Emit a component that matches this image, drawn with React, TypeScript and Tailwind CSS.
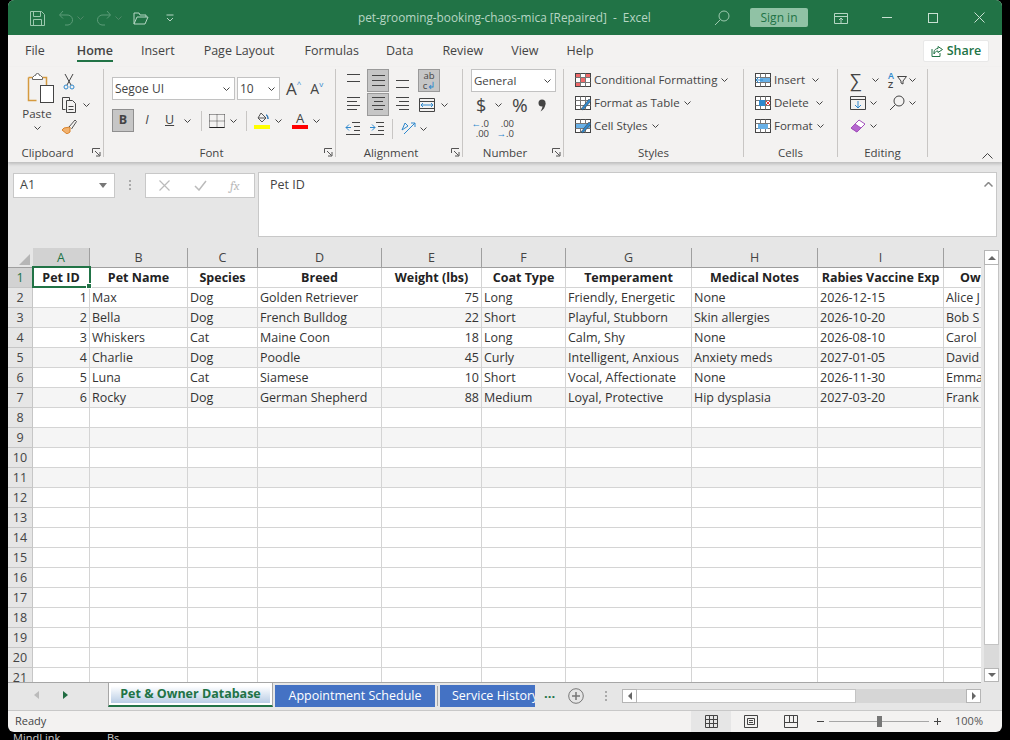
import type { ReactNode } from "react";

const font = "font-['Open_Sans','Noto_Sans',sans-serif]";

function Chev({ className = "" }: { className?: string }) {
  return (
    <svg width="7" height="4" viewBox="0 0 7 4" fill="none" stroke="#444" strokeWidth="1" className={className}>
      <path d="M.5.500l3 3 3-3" />
    </svg>
  );
}

function Ic({ w = 16, h = 16, children, className = "" }: { w?: number; h?: number; children: ReactNode; className?: string }) {
  return (
    <svg width={w} height={h} viewBox={`0 0 ${w} ${h}`} fill="none" className={`shrink-0 ${className}`}>
      {children}
    </svg>
  );
}

// horizontal text-line style icon used by the alignment group
function Lines({ rows }: { rows: [number, number, number][] }) {
  return (
    <Ic w={15} h={15}>
      {rows.map(([y, x1, x2]) => (
        <path key={y} d={`M${x1} ${y}.5H${x2}`} stroke="#444" />
      ))}
    </Ic>
  );
}

function GridIcon({ children }: { children?: ReactNode }) {
  return (
    <Ic>
      <rect x=".5" y="1.500" width="15" height="13" stroke="#444" fill="#fff" />
      <path d="M.5 5.500h15M.5 10.500h15M5.500 1.500v13M10.500 1.500v13" stroke="#777" />
      {children}
    </Ic>
  );
}

function Group({ width, label, launcher, children }: { width: number; label: string; launcher?: boolean; children: ReactNode }) {
  return (
    <div style={{ width }} className="relative h-[88px] shrink-0 border-r border-[#c8c6c4]">
      <div className="h-[78px]">{children}</div>
      <div className={`text-center text-[11.5px] leading-[12px] text-[#444] ${launcher ? "pr-[16px]" : ""}`}>{label}</div>
      {launcher && (
        <svg width="9" height="9" viewBox="0 0 9 9" fill="none" stroke="#555" className="absolute bottom-0 right-[2px]">
          <path d="M.5 5V.5H8M3 3l4.500 4.500M8 4v4H4" />
        </svg>
      )}
    </div>
  );
}

const tabs = [
  { label: "File", ml: 17 },
  { label: "Home", ml: 32, active: true },
  { label: "Insert", ml: 28 },
  { label: "Page Layout", ml: 29 },
  { label: "Formulas", ml: 30 },
  { label: "Data", ml: 27 },
  { label: "Review", ml: 29 },
  { label: "View", ml: 28 },
  { label: "Help", ml: 28 },
];

const columns = ["A", "B", "C", "D", "E", "F", "G", "H", "I", ""];

const headers = ["Pet ID", "Pet Name", "Species", "Breed", "Weight (lbs)", "Coat Type", "Temperament", "Medical Notes", "Rabies Vaccine Exp", "Ow"];

const rows = [
  ["1", "Max", "Dog", "Golden Retriever", "75", "Long", "Friendly, Energetic", "None", "2026-12-15", "Alice J"],
  ["2", "Bella", "Dog", "French Bulldog", "22", "Short", "Playful, Stubborn", "Skin allergies", "2026-10-20", "Bob S"],
  ["3", "Whiskers", "Cat", "Maine Coon", "18", "Long", "Calm, Shy", "None", "2026-08-10", "Carol"],
  ["4", "Charlie", "Dog", "Poodle", "45", "Curly", "Intelligent, Anxious", "Anxiety meds", "2027-01-05", "David"],
  ["5", "Luna", "Cat", "Siamese", "10", "Short", "Vocal, Affectionate", "None", "2026-11-30", "Emma"],
  ["6", "Rocky", "Dog", "German Shepherd", "88", "Medium", "Loyal, Protective", "Hip dysplasia", "2027-03-20", "Frank"],
];

const gridCols = "grid-cols-[25px_57px_98px_70px_124px_100px_84px_126px_126px_126px_72px]";

function Spreadsheet() {
  const rowNums = Array.from({ length: 21 }, (_, i) => i + 1);
  return (
    <div className="relative min-w-0 flex-1 overflow-hidden border-b border-[#a6a6a6]">
      <div className={`grid w-[1008px] ${gridCols} auto-rows-[20px] text-[12.5px] leading-[19px] text-[#333]`}>
        <div className="relative border-b border-[#9f9f9f] bg-[#e6e6e6]">
          <div className="absolute bottom-[2px] right-[3px] h-0 w-0 border-b-[11px] border-l-[11px] border-b-[#b6b6b6] border-l-transparent" />
        </div>
        {columns.map((c, i) => (
          <div
            key={i}
            className={`border-r border-b border-[#9f9f9f] text-center ${i === 0 ? "bg-[#d2d2d2] text-[#217346]" : "bg-[#e6e6e6] text-[#444]"} ${i === 9 ? "border-r-0" : ""}`}
          >
            {c}
          </div>
        ))}
        {rowNums.map((n) => {
          const data = n === 1 ? headers : n <= 7 ? rows[n - 2] : null;
          const shaded = n > 1 && n % 2 === 1 && n < 12;
          return (
            <div key={n} className="contents">
              <div className={`border-r border-b border-[#c6c6c6] text-center ${n === 1 ? "bg-[#d2d2d2] text-[#217346]" : "bg-[#e6e6e6] text-[#444]"}`}>
                {n}
              </div>
              {columns.map((_, c) => {
                const value = data ? data[c] : "";
                const right = n > 1 && (c === 0 || c === 4);
                return (
                  <div
                    key={c}
                    className={`overflow-hidden whitespace-nowrap border-r border-b border-[#d4d4d4] px-[2px] ${shaded ? "bg-[#f5f5f5]" : "bg-white"} ${n === 1 && c < 9 ? "text-center" : ""} ${n === 1 ? "font-bold text-[#222]" : ""} ${n === 1 && c === 9 ? "pl-[16px]" : ""} ${right ? "text-right" : ""}`}
                  >
                    {value}
                  </div>
                );
              })}
            </div>
          );
        })}
      </div>
      {/* selected cell A1 */}
      <div className="absolute left-[24px] top-[18px] h-[22px] w-[59px] border-2 border-[#217346]">
        <div className="absolute -bottom-[3px] -right-[3px] h-[6px] w-[6px] border border-white bg-[#217346]" />
      </div>
    </div>
  );
}

export default function App() {
  return (
    <div className={`relative h-[740px] w-[1010px] overflow-hidden bg-black ${font}`}>
      <div className="ml-[8px] flex h-[732px] w-[994px] flex-col overflow-hidden rounded-[6px] bg-[#f3f2f1]">
        {/* Title bar */}
        <div className="relative flex h-[35px] shrink-0 items-center bg-[#217346]">
          <div className="flex items-center pl-[21px]">
            <Ic>
              <path d="M1.500 1.500h11l3 3v11h-14zM4.500 1.500v5h7v-5M4.500 15.500v-6h8v6" stroke="#9cc9ae" />
            </Ic>
            <Ic className="ml-[13px]">
              <path d="M5 1L1.500 5 5 8.500M2 5h7a5 5 0 0 1 1 10H7" stroke="#5d9c79" />
            </Ic>
            <Chev className="ml-[3px] opacity-30 invert" />
            <Ic className="ml-[12px]">
              <path d="M11 1l3.500 4L11 8.500M14 5H7a5 5 0 0 0-1 10h3" stroke="#5d9c79" />
            </Ic>
            <Chev className="ml-[3px] opacity-30 invert" />
            <Ic className="ml-[11px]">
              <path d="M1 14V3h5l1 2h6v2M1 14l3-7h11l-3 7z" stroke="#b5d6c3" />
            </Ic>
            <svg width="8" height="8" viewBox="0 0 8 8" fill="none" stroke="#b5d6c3" className="ml-[17px]">
              <path d="M.5 1h7M1 4l3 3 3-3" />
            </svg>
          </div>
          <div className="absolute left-[350px] top-[8px] whitespace-nowrap text-[11.8px] leading-[18px] text-[#b7d6c4]">
            pet-grooming-booking-chaos-mica [Repaired]&nbsp; -&nbsp; Excel
          </div>
          <div className="ml-auto flex items-center">
            <Ic>
              <circle cx="10" cy="6" r="5" stroke="#9cc9ae" />
              <path d="M6.500 9.500L1 15" stroke="#9cc9ae" />
            </Ic>
            <div className="ml-[20px] flex h-[19px] w-[58px] items-center justify-center rounded-[2px] bg-[#90c2a5] text-[12px] text-[#217346]">Sign in</div>
            <Ic w={14} h={14} className="ml-[26px]">
              <path d="M.5 2.500h13v10H.5zM.5 5.500h13M7 12V7M5 9l2-2 2 2" stroke="#b5d6c3" />
            </Ic>
            <div className="ml-[34px] h-px w-[10px] bg-[#c9e0d2]" />
            <div className="ml-[36px] h-[10px] w-[10px] border border-[#c9e0d2]" />
            <Ic w={11} h={11} className="ml-[36px] mr-[17px]">
              <path d="M.5.500l10 10M10.500.500l-10 10" stroke="#c9e0d2" />
            </Ic>
          </div>
        </div>

        {/* Ribbon tabs */}
        <div className="flex h-[32px] shrink-0 items-center text-[12.5px] text-[#444]">
          {tabs.map((t) => (
            <div key={t.label} style={{ marginLeft: t.ml }} className={`relative whitespace-nowrap ${t.active ? "font-semibold text-[#444]" : ""}`}>
              {t.label}
              {t.active && <div className="absolute -bottom-[2px] left-0 h-[2px] w-full bg-[#217346]" />}
            </div>
          ))}
          <div className="ml-auto mr-[13px] flex h-[22px] w-[66px] items-center justify-center gap-[4px] rounded-[2px] border border-[#e8e8e8] bg-white font-semibold text-[#217346]">
            <Ic w={12} h={12}>
              <path d="M7 1.500l4.500 3L7 7.500V6C5 6 4 7 3 9V7c0-2 2-3.500 4-3.500zM1 4v7.500h8V8" stroke="#217346" />
            </Ic>
            Share
          </div>
        </div>

        {/* Ribbon */}
        <div className="relative z-10 flex h-[95px] shrink-0 pt-[2px] text-[11.5px] text-[#444] shadow-[0_2px_3px_rgba(0,0,0,0.18)]">
          <Group width={96} label="Clipboard" launcher>
            <div className="flex pl-[18px] pt-[3px]">
              <div className="flex w-[30px] flex-col items-center">
                <Ic w={28} h={31}>
                  <path d="M1.500 5.500h5M15 5.500h4.500V13M1.500 5.500v23h8" stroke="#d59a3e" strokeWidth="1.500" />
                  <path d="M5.500 5.500l2-2h1a2 2 0 0 1 4 0h1l2 2v2h-10z" fill="#fff" stroke="#666" />
                  <rect x="13.500" y="13.500" width="13" height="17" fill="#fff" stroke="#444" />
                </Ic>
                <div className="-ml-[8px] mt-[3px] text-[11.5px] leading-[15px]">Paste</div>
                <Chev className="-ml-[8px] mt-[5px]" />
              </div>
              <div className="ml-[5px] flex flex-col items-start">
                <Ic w={14} h={18} className="ml-[1px] mt-[1px]">
                  <path d="M3 1l6 11M11 1L5 12" stroke="#444" />
                  <circle cx="4" cy="14" r="2" stroke="#2e88cd" />
                  <circle cx="10" cy="14" r="2" stroke="#2e88cd" />
                </Ic>
                <div className="mt-[5px] flex items-center">
                  <Ic w={17} h={17}>
                    <path d="M1.500 1.500h7v3M1.500 1.500v12h3" stroke="#444" />
                    <path d="M5.500 4.500h6l3 3v9h-9zM7.500 10.500h5M7.500 13.500h5" stroke="#444" />
                  </Ic>
                  <Chev className="ml-[5px]" />
                </div>
                <Ic w={16} h={15} className="mt-[6px]">
                  <path d="M9 8l-6 1-2 2 5 4 3-2z" fill="#f2b26e" stroke="#d9822b" />
                  <path d="M8 8l6-7 1.500 1.500-5 7.500" stroke="#555" />
                </Ic>
              </div>
            </div>
          </Group>

          <Group width={232} label="Font" launcher>
            <div className="pl-[8px] pt-[8px]">
              <div className="flex items-center">
                <div className="flex h-[23px] w-[123px] items-center justify-between border border-[#c2c2c2] bg-white pl-[2px] pr-[4px] text-[12px]">
                  Segoe UI <Chev />
                </div>
                <div className="ml-[2px] flex h-[23px] w-[43px] items-center justify-between border border-[#c2c2c2] bg-white pl-[2px] pr-[4px] text-[12px]">
                  10 <Chev />
                </div>
                <div className="ml-[6px] flex items-start text-[17px] leading-[20px]">
                  A<span className="text-[8px] leading-[10px] text-[#2e88cd]">^</span>
                </div>
                <div className="ml-[9px] flex items-start text-[14px] leading-[20px]">
                  A<span className="text-[8px] leading-[10px] text-[#2e88cd]">v</span>
                </div>
              </div>
              <div className="mt-[9px] flex h-[23px] items-center text-[12.5px]">
                <div className="flex h-[23px] w-[22px] items-center justify-center border border-[#8f8f8f] bg-[#c6c6c6] font-bold">B</div>
                <div className="ml-[9px] w-[8px] text-center italic">I</div>
                <div className="ml-[14px] w-[9px] text-center underline">U</div>
                <Chev className="ml-[10px]" />
                <div className="ml-[10px] h-[20px] w-px bg-[#c8c6c4]" />
                <Ic className="ml-[7px]">
                  <path d="M.5 1.500h15M.5 8h15M8 1.500v13M.5 1.500v13M15.500 1.500v13" stroke="#444" strokeDasharray="1 1" />
                  <path d="M.5 14.500h15" stroke="#222" />
                </Ic>
                <Chev className="ml-[5px]" />
                <div className="ml-[9px] h-[20px] w-px bg-[#c8c6c4]" />
                <div className="ml-[7px] flex w-[16px] flex-col items-center">
                  <Ic w={14} h={12}>
                    <path d="M6 1l5 5-4 4-4-4zM3 6h8" stroke="#555" />
                    <path d="M11 3c1 0 2 2 2 4" stroke="#2e75b6" strokeWidth="1.500" />
                  </Ic>
                  <div className="mt-px h-[4px] w-[16px] bg-[#ffff00]" />
                </div>
                <Chev className="ml-[5px]" />
                <div className="ml-[10px] flex w-[16px] flex-col items-center">
                  <div className="h-[12px] text-[13px] leading-[12px]">A</div>
                  <div className="mt-px h-[4px] w-[16px] bg-[#ff0000]" />
                </div>
                <Chev className="ml-[5px]" />
              </div>
            </div>
          </Group>

          <Group width={127} label="Alignment" launcher>
            <div className="pl-[9px]">
              <div className="flex h-[23px] items-center">
                <div className="w-[22px] pl-[1px]"><Lines rows={[[1, 1, 14], [8, 1, 14]]} /></div>
                <div className="flex h-[23px] w-[22px] items-center justify-center border border-[#9a9a9a] bg-[#c6c6c6]"><Lines rows={[[2, 1, 14], [7, 1, 14], [12, 1, 14]]} /></div>
                <div className="flex w-[26px] justify-center"><Lines rows={[[7, 1, 14], [14, 1, 14]]} /></div>
                <div className="ml-[3px] flex h-[23px] w-[22px] flex-col items-center justify-center border border-[#9a9a9a] bg-[#c6c6c6] text-[9.5px] leading-[10px] text-[#444]">
                  ab
                  <span>c<span className="text-[#2e88cd]">↲</span></span>
                </div>
              </div>
              <div className="mt-[1px] flex h-[23px] items-center">
                <div className="w-[22px] pl-[1px]"><Lines rows={[[0, 1, 14], [4, 1, 11], [8, 1, 14], [12, 1, 11]]} /></div>
                <div className="flex h-[23px] w-[22px] items-center justify-center border border-[#9a9a9a] bg-[#c6c6c6]"><Lines rows={[[0, 1, 14], [4, 3, 12], [8, 1, 14], [12, 3, 12]]} /></div>
                <div className="flex w-[26px] justify-center"><Lines rows={[[0, 1, 14], [4, 4, 14], [8, 1, 14], [12, 4, 14]]} /></div>
                <Ic className="ml-[4px]">
                  <path d="M.5 1.500h15v13H.5zM.5 4.500h15M.5 11.500h15" stroke="#444" />
                  <path d="M2 8h12M2 8l2-2M2 8l2 2M14 8l-2-2M14 8l-2 2" stroke="#2e88cd" />
                </Ic>
                <Chev className="ml-[6px]" />
              </div>
              <div className="mt-[1px] flex h-[23px] items-center">
                <Ic>
                  <path d="M7 1.500h8M9 5.500h6M9 9.500h6M1 13.500h14" stroke="#444" />
                  <path d="M1 6.500h5M1 6.500l3-3M1 6.500l3 3" stroke="#2e88cd" />
                </Ic>
                <Ic className="ml-[8px]">
                  <path d="M7 1.500h8M9 5.500h6M9 9.500h6M1 13.500h14" stroke="#444" />
                  <path d="M1 6.500h5M6 6.500l-3-3M6 6.500l-3 3" stroke="#2e88cd" />
                </Ic>
                <div className="ml-[7px] h-[20px] w-px bg-[#c8c6c4]" />
                <Ic className="ml-[7px]">
                  <path d="M2 9l3-7 3 3-6 4M4 13l11-11M15 2h-4M15 2v4" stroke="#2e88cd" />
                </Ic>
                <Chev className="ml-[4px]" />
              </div>
            </div>
          </Group>

          <Group width={101} label="Number" launcher>
            <div className="pl-[8px]">
              <div className="flex h-[23px] w-[85px] items-center justify-between border border-[#c2c2c2] bg-white pl-[2px] pr-[4px] text-[11.5px]">
                General <Chev />
              </div>
              <div className="mt-[1px] flex h-[24px] items-center pl-[5px]">
                <div className="w-[10px] text-center text-[18px] leading-[22px]">$</div>
                <Chev className="ml-[9px]" />
                <div className="ml-[10px] text-[19px] leading-[22px]">%</div>
                <Ic w={8} h={13} className="ml-[10px]">
                  <circle cx="4" cy="4" r="3.500" fill="#444" />
                  <path d="M7.500 4c0 4-2 7-5 8.500 1.500-2.500 2-4 2-6z" fill="#444" />
                </Ic>
              </div>
              <div className="mt-[2px] flex h-[20px] items-center pl-[2px] text-[9.5px] leading-[10px]">
                <div className="flex w-[16px] flex-col items-end">
                  <span><span className="text-[#2e88cd]">←</span>.0</span>
                  <span>.00</span>
                </div>
                <div className="ml-[9px] flex w-[16px] flex-col items-end">
                  <span>.00</span>
                  <span><span className="text-[#2e88cd]">→</span>.0</span>
                </div>
              </div>
            </div>
          </Group>

          <Group width={180} label="Styles">
            <div className="flex flex-col gap-[7px] pl-[11px] pt-[3px]">
              <div className="flex h-[16px] items-center gap-[3px]">
                <GridIcon><path d="M1 2h4v3H1zM6 6h4v4H6zM1 11h4v3H1zM11 2h4v3h-4z" fill="#f0696a" /></GridIcon>
                Conditional Formatting <Chev className="ml-[1px]" />
              </div>
              <div className="flex h-[16px] items-center gap-[3px]">
                <GridIcon><path d="M6 14l8-10 2 2-8 9z" fill="#2e88cd" stroke="#444" strokeWidth=".6" /></GridIcon>
                Format as Table <Chev className="ml-[1px]" />
              </div>
              <div className="flex h-[16px] items-center gap-[3px]">
                <GridIcon><path d="M1 6h14v4H1z" fill="#68b0e6" /><path d="M6 14l8-10 2 2-8 9z" fill="#2e88cd" stroke="#444" strokeWidth=".6" /></GridIcon>
                Cell Styles <Chev className="ml-[1px]" />
              </div>
            </div>
          </Group>

          <Group width={94} label="Cells">
            <div className="flex flex-col gap-[7px] pl-[11px] pt-[3px]">
              <div className="flex h-[16px] items-center">
                <GridIcon><path d="M5 6h10v4H5z" fill="#68b0e6" /><path d="M1 8h7M1 8l3-3M1 8l3 3" stroke="#2e88cd" /></GridIcon>
                <span className="ml-[3px] w-[38px]">Insert</span> <Chev />
              </div>
              <div className="flex h-[16px] items-center">
                <GridIcon><path d="M4 5h6v6H4z" fill="#2e88cd" /><path d="M11 6l4 4M15 6l-4 4" stroke="#e33" /></GridIcon>
                <span className="ml-[3px] w-[42px]">Delete</span> <Chev />
              </div>
              <div className="flex h-[16px] items-center">
                <GridIcon><path d="M3 6h10v5H3z" fill="#68b0e6" /></GridIcon>
                <span className="ml-[3px] w-[43px]">Format</span> <Chev />
              </div>
            </div>
          </Group>

          <Group width={90} label="Editing">
            <div className="flex flex-col pl-[12px]">
              <div className="flex h-[21px] items-center">
                <div className="w-[16px] text-[18px] leading-[20px]">∑</div>
                <Chev className="ml-[6px]" />
                <div className="ml-[9px] flex w-[9px] flex-col text-[9px] font-semibold leading-[9px]">
                  <span className="text-[#2e88cd]">A</span>
                  <span>Z</span>
                </div>
                <Ic w={10} h={10}><path d="M.5 1.500h9L6 6v3L4 8V6z" stroke="#444" /></Ic>
                <Chev className="ml-[2px]" />
              </div>
              <div className="mt-[1px] flex h-[23px] items-center">
                <Ic>
                  <path d="M.5 1.500h15v13H.5zM.5 4.500h15" stroke="#444" />
                  <path d="M8 6v7M5 10l3 3 3-3" stroke="#2e88cd" />
                </Ic>
                <Chev className="ml-[4px]" />
                <Ic className="ml-[12px]">
                  <circle cx="10" cy="6" r="5" stroke="#444" />
                  <path d="M6.500 9.500L1 15" stroke="#444" />
                </Ic>
                <Chev className="ml-[4px]" />
              </div>
              <div className="flex h-[23px] items-center">
                <Ic>
                  <path d="M1 10l8-8 6 4-8 8z" fill="#fff" stroke="#a24fbb" />
                  <path d="M1 10l4-4 6 4-4 4z" fill="#b565cf" stroke="#a24fbb" />
                </Ic>
                <Chev className="ml-[4px]" />
              </div>
            </div>
          </Group>

          <svg width="11" height="6" viewBox="0 0 11 6" fill="none" stroke="#444" className="absolute bottom-[3px] right-[9px]">
            <path d="M.5 5.500l5-5 5 5" />
          </svg>
        </div>

        {/* Formula bar */}
        <div className="flex h-[86px] shrink-0 bg-[#e6e6e6] pl-[5px] pr-[5px] pt-[10px] text-[12.5px] text-[#444]">
          <div className="mt-px flex h-[25px] w-[102px] items-center justify-between border border-[#c8c8c8] bg-white pl-[6px] pr-[7px]">
            A1
            <div className="h-0 w-0 border-x-[4px] border-t-[5px] border-x-transparent border-t-[#777]" />
          </div>
          <div className="ml-[12px] flex h-[26px] w-[6px] flex-col items-center justify-center gap-[2px]">
            <div className="h-[2px] w-[2px] bg-[#aaa]" />
            <div className="h-[2px] w-[2px] bg-[#aaa]" />
            <div className="h-[2px] w-[2px] bg-[#aaa]" />
          </div>
          <div className="ml-[12px] mt-px flex h-[25px] w-[110px] items-center border border-[#c8c8c8] bg-white pl-[13px] text-[#bbb]">
            <Ic w={11} h={11}><path d="M.5.500l10 10M10.500.500l-10 10" stroke="#bbb" strokeWidth="1.200" /></Ic>
            <Ic w={13} h={11} className="ml-[24px]"><path d="M1 6l4 4 7-9" stroke="#bbb" strokeWidth="1.500" /></Ic>
            <span className="ml-[23px] font-serif text-[13px] italic">fx</span>
          </div>
          <div className="relative ml-[3px] h-[65px] flex-1 border border-[#c8c8c8] bg-white pl-[11px] pt-[3px] leading-[18px]">
            Pet ID
            <svg width="9" height="5" viewBox="0 0 9 5" fill="none" stroke="#888" strokeWidth="1.500" className="absolute right-[3px] top-[9px]">
              <path d="M.5 4.500l4-4 4 4" />
            </svg>
          </div>
        </div>

        {/* Sheet + vertical scrollbar */}
        <div className="flex h-[435px] shrink-0 bg-[#e6e6e6]">
          <Spreadsheet />
          <div className="flex w-[21px] shrink-0 flex-col pl-[3px] pr-[3px] pt-[2px]">
            <div className="flex h-[15px] shrink-0 items-center justify-center border border-[#b5b5b5] bg-white">
              <div className="h-0 w-0 border-x-[4px] border-b-[4px] border-x-transparent border-b-[#666]" />
            </div>
            <div className="h-[380px] shrink-0 border-x border-b border-[#c4c4c4] bg-white" />
            <div className="flex-1 bg-[#dadada]" />
            <div className="mb-[1px] flex h-[14px] shrink-0 items-center justify-center border border-[#b5b5b5] bg-white">
              <div className="h-0 w-0 border-x-[4px] border-t-[4px] border-x-transparent border-t-[#666]" />
            </div>
          </div>
        </div>

        {/* Sheet tabs */}
        <div className="flex h-[28px] shrink-0 border-b border-[#c8c8c8] bg-[#e6e6e6] text-[12.5px]">
          <div className="flex w-[100px] items-center pb-[3px] pl-[26px]">
            <div className="h-0 w-0 border-y-[4px] border-r-[5px] border-y-transparent border-r-[#bbb]" />
            <div className="ml-[24px] h-0 w-0 border-y-[4px] border-l-[5px] border-y-transparent border-l-[#1f6b41]" />
          </div>
          <div className="-mt-px h-[25px] w-[165px] border-x border-[#a6a6a6] border-b-[2px] border-b-[#217346] bg-white px-[2px] pb-[2px] pt-[4px]">
            <div className="flex h-full items-center justify-center whitespace-nowrap bg-gradient-to-b from-white to-[#b9cde5] font-bold text-[#217346]">
              Pet &amp; Owner Database
            </div>
          </div>
          <div className="ml-[2px] mt-[2px] flex h-[22px] w-[160px] items-center justify-center bg-[#4472c4] text-white">Appointment Schedule</div>
          <div className="ml-[2px] mt-[3px] h-[20px] w-px bg-[#a6a6a6]" />
          <div className="ml-[2px] mt-[2px] h-[22px] w-[95px] overflow-hidden whitespace-nowrap bg-[#4472c4] pl-[12px] leading-[22px] text-white">Service History</div>
          <div className="ml-[9px] mt-[1px] text-[13px] font-bold text-[#217346]">...</div>
          <Ic className="ml-[13px] mt-[5px]">
            <circle cx="8" cy="8" r="7.300" stroke="#777" />
            <path d="M8 4v8M4 8h8" stroke="#777" strokeWidth="1.500" />
          </Ic>
          <div className="ml-[21px] mt-[8px] flex h-[10px] w-[2px] flex-col justify-between">
            <div className="h-[2px] w-[2px] bg-[#aaa]" />
            <div className="h-[2px] w-[2px] bg-[#aaa]" />
            <div className="h-[2px] w-[2px] bg-[#aaa]" />
          </div>
          <div className="ml-[15px] mt-[6px] flex h-[14px] w-[359px]">
            <div className="flex w-[15px] items-center justify-center border border-[#b5b5b5] bg-white">
              <div className="h-0 w-0 border-y-[4px] border-r-[4px] border-y-transparent border-r-[#666]" />
            </div>
            <div className="w-[219px] border-y border-r border-[#c4c4c4] bg-white" />
            <div className="flex-1 bg-[#d6d6d6]" />
            <div className="flex w-[15px] items-center justify-center border border-[#b5b5b5] bg-white">
              <div className="h-0 w-0 border-y-[4px] border-l-[4px] border-y-transparent border-l-[#666]" />
            </div>
          </div>
        </div>

        {/* Status bar */}
        <div className="flex min-h-0 flex-1 items-center text-[11px] text-[#444]">
          <div className="pl-[7px]">Ready</div>
          <div className="ml-auto flex h-full items-center">
            <div className="flex h-full w-[40px] items-center justify-center bg-[#e6e6e6]">
              <Ic w={13} h={13}><path d="M.5.500h12v12H.5zM4.500.500v12M8.500.500v12M.5 4.500h12M.5 8.500h12" stroke="#444" /></Ic>
            </div>
            <div className="flex h-full w-[40px] items-center justify-center">
              <Ic w={14} h={13}><path d="M.5.500h13v12H.5zM3.500 3.500h7v6h-7zM5 5.500h4M5 7.500h4" stroke="#444" /></Ic>
            </div>
            <div className="flex h-full w-[40px] items-center justify-center">
              <Ic w={14} h={13}><path d="M.5.500h13v12H.5zM.5 7.500h13M5.500.500v7M9.500.500v7" stroke="#444" /></Ic>
            </div>
            <div className="ml-[6px] h-px w-[7px] bg-[#444]" />
            <div className="relative ml-[5px] h-px w-[100px] bg-[#a6a6a6]">
              <div className="absolute -top-[5px] left-[48px] h-[11px] w-[5px] bg-[#777]" />
            </div>
            <div className="relative ml-[5px] h-px w-[7px] bg-[#444]">
              <div className="absolute -top-[3px] left-[3px] h-[7px] w-px bg-[#444]" />
            </div>
            <div className="ml-[14px] mr-[19px] text-[#555]">100%</div>
          </div>
        </div>
      </div>
      <div className="absolute left-[13px] top-[732px] text-[11px] leading-[12px] text-[#ccc]">MindLink</div>
      <div className="absolute left-[107px] top-[732px] text-[11px] leading-[12px] text-[#ccc]">Bs</div>
    </div>
  );
}
